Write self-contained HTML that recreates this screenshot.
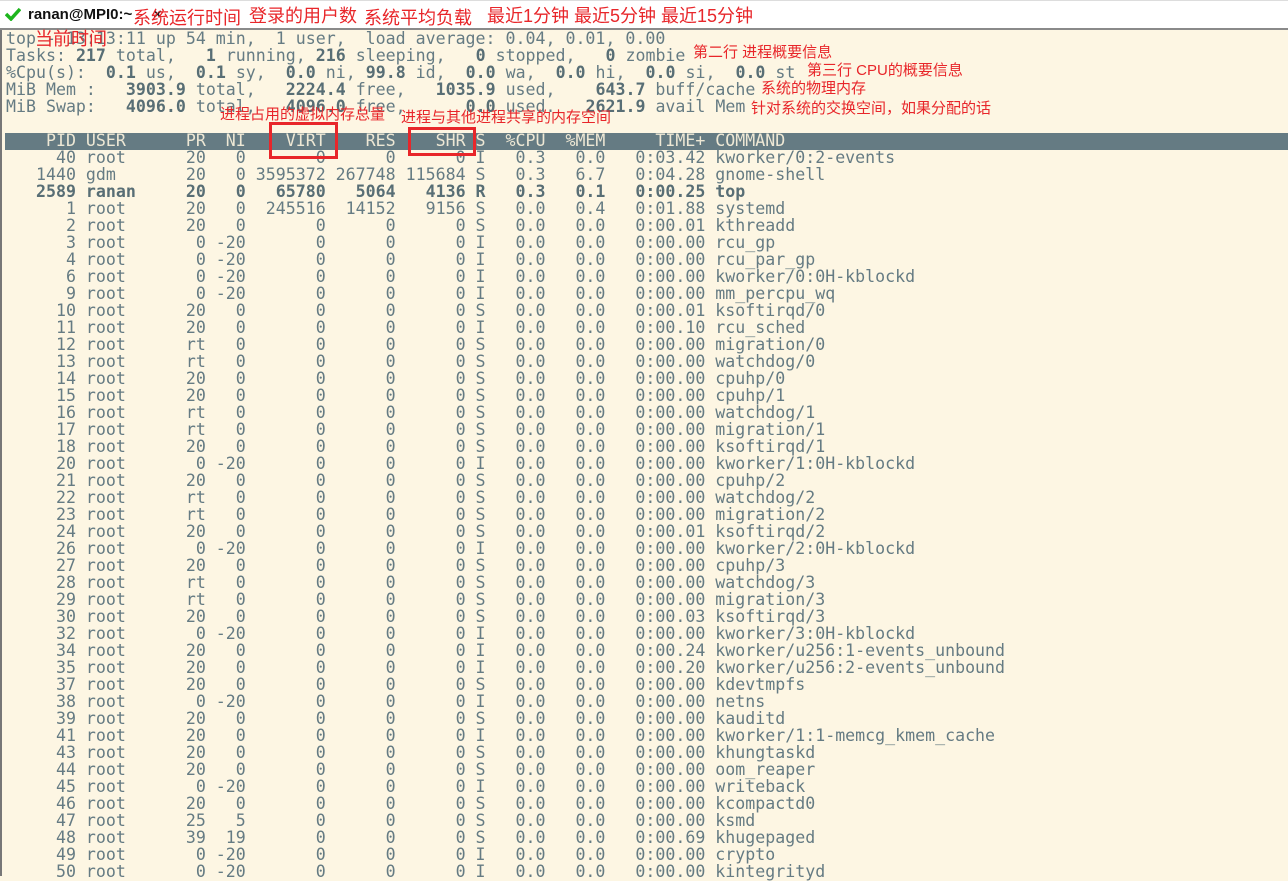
<!DOCTYPE html>
<html><head><meta charset="utf-8"><style>
html,body{margin:0;padding:0;width:1288px;height:876px;overflow:hidden;background:#fdf6e3;}
#top{position:absolute;left:0;top:0;width:1288px;height:28px;background:#fff;border-bottom:2px solid #8a8a8a;}
#top .tl{position:absolute;left:0;top:0;width:1288px;height:1px;background:#ddd;}
#tab{position:absolute;left:28px;top:6px;font:bold 15px "Liberation Sans",sans-serif;color:#111;}
#term{position:absolute;left:0;top:30px;width:1288px;height:846px;background:#fdf6e3;border-left:2px solid #777;box-sizing:border-box;}
pre{position:absolute;left:6px;top:30px;margin:0;font-family:"DejaVu Sans Mono",monospace;font-size:16.6px;line-height:17px;color:#657b83;}
b{color:#586e75;}
.bar{position:absolute;left:5px;top:133px;width:1283px;height:17px;background:#657b83;}
.hd{color:#eee8d5;}
.r{position:absolute;color:#e8262a;font-family:"Liberation Sans","Noto Sans CJK SC",sans-serif;font-size:18px;line-height:20px;white-space:nowrap;}
.s{font-size:15px;line-height:18px;}
.box{position:absolute;border:3px solid #e8262a;box-sizing:border-box;}
</style></head><body>
<div id="top"><div class="tl"></div>
<svg style="position:absolute;left:5px;top:7px" width="16" height="14" viewBox="0 0 16 14"><path d="M1 7 L6 12 L15 2" fill="none" stroke="#1db51d" stroke-width="3.5"/></svg>
<div id="tab">ranan@MPI0:~ &nbsp;&nbsp;&nbsp;&nbsp;×</div>
</div>
<div id="term"></div>
<div class="bar"></div>
<pre>top - 13:13:11 up 54 min,  1 user,  load average: 0.04, 0.01, 0.00
Tasks: <b>217</b> total,   <b>1</b> running, <b>216</b> sleeping,   <b>0</b> stopped,   <b>0</b> zombie
%Cpu(s):  <b>0.1</b> us,  <b>0.1</b> sy,  <b>0.0</b> ni, <b>99.8</b> id,  <b>0.0</b> wa,  <b>0.0</b> hi,  <b>0.0</b> si,  <b>0.0</b> st
MiB Mem :   <b>3903.9</b> total,   <b>2224.4</b> free,   <b>1035.9</b> used,    <b>643.7</b> buff/cache
MiB Swap:   <b>4096.0</b> total,   <b>4096.0</b> free,      <b>0.0</b> used.   <b>2621.9</b> avail Mem

<span class="hd">    PID USER      PR  NI    VIRT    RES    SHR S  %CPU  %MEM     TIME+ COMMAND</span>
     40 root      20   0       0      0      0 I   0.3   0.0   0:03.42 kworker/0:2-events
   1440 gdm       20   0 3595372 267748 115684 S   0.3   6.7   0:04.28 gnome-shell
<b>   2589 ranan     20   0   65780   5064   4136 R   0.3   0.1   0:00.25 top</b>
      1 root      20   0  245516  14152   9156 S   0.0   0.4   0:01.88 systemd
      2 root      20   0       0      0      0 S   0.0   0.0   0:00.01 kthreadd
      3 root       0 -20       0      0      0 I   0.0   0.0   0:00.00 rcu_gp
      4 root       0 -20       0      0      0 I   0.0   0.0   0:00.00 rcu_par_gp
      6 root       0 -20       0      0      0 I   0.0   0.0   0:00.00 kworker/0:0H-kblockd
      9 root       0 -20       0      0      0 I   0.0   0.0   0:00.00 mm_percpu_wq
     10 root      20   0       0      0      0 S   0.0   0.0   0:00.01 ksoftirqd/0
     11 root      20   0       0      0      0 I   0.0   0.0   0:00.10 rcu_sched
     12 root      rt   0       0      0      0 S   0.0   0.0   0:00.00 migration/0
     13 root      rt   0       0      0      0 S   0.0   0.0   0:00.00 watchdog/0
     14 root      20   0       0      0      0 S   0.0   0.0   0:00.00 cpuhp/0
     15 root      20   0       0      0      0 S   0.0   0.0   0:00.00 cpuhp/1
     16 root      rt   0       0      0      0 S   0.0   0.0   0:00.00 watchdog/1
     17 root      rt   0       0      0      0 S   0.0   0.0   0:00.00 migration/1
     18 root      20   0       0      0      0 S   0.0   0.0   0:00.00 ksoftirqd/1
     20 root       0 -20       0      0      0 I   0.0   0.0   0:00.00 kworker/1:0H-kblockd
     21 root      20   0       0      0      0 S   0.0   0.0   0:00.00 cpuhp/2
     22 root      rt   0       0      0      0 S   0.0   0.0   0:00.00 watchdog/2
     23 root      rt   0       0      0      0 S   0.0   0.0   0:00.00 migration/2
     24 root      20   0       0      0      0 S   0.0   0.0   0:00.01 ksoftirqd/2
     26 root       0 -20       0      0      0 I   0.0   0.0   0:00.00 kworker/2:0H-kblockd
     27 root      20   0       0      0      0 S   0.0   0.0   0:00.00 cpuhp/3
     28 root      rt   0       0      0      0 S   0.0   0.0   0:00.00 watchdog/3
     29 root      rt   0       0      0      0 S   0.0   0.0   0:00.00 migration/3
     30 root      20   0       0      0      0 S   0.0   0.0   0:00.03 ksoftirqd/3
     32 root       0 -20       0      0      0 I   0.0   0.0   0:00.00 kworker/3:0H-kblockd
     34 root      20   0       0      0      0 I   0.0   0.0   0:00.24 kworker/u256:1-events_unbound
     35 root      20   0       0      0      0 I   0.0   0.0   0:00.20 kworker/u256:2-events_unbound
     37 root      20   0       0      0      0 S   0.0   0.0   0:00.00 kdevtmpfs
     38 root       0 -20       0      0      0 I   0.0   0.0   0:00.00 netns
     39 root      20   0       0      0      0 S   0.0   0.0   0:00.00 kauditd
     41 root      20   0       0      0      0 I   0.0   0.0   0:00.00 kworker/1:1-memcg_kmem_cache
     43 root      20   0       0      0      0 S   0.0   0.0   0:00.00 khungtaskd
     44 root      20   0       0      0      0 S   0.0   0.0   0:00.00 oom_reaper
     45 root       0 -20       0      0      0 I   0.0   0.0   0:00.00 writeback
     46 root      20   0       0      0      0 S   0.0   0.0   0:00.00 kcompactd0
     47 root      25   5       0      0      0 S   0.0   0.0   0:00.00 ksmd
     48 root      39  19       0      0      0 S   0.0   0.0   0:00.69 khugepaged
     49 root       0 -20       0      0      0 I   0.0   0.0   0:00.00 crypto
     50 root       0 -20       0      0      0 I   0.0   0.0   0:00.00 kintegrityd
</pre>
<div class="r" style="left:133px;top:8px">系统运行时间</div>
<div class="r" style="left:249px;top:6px">登录的用户数</div>
<div class="r" style="left:364px;top:8px">系统平均负载</div>
<div class="r" style="left:487px;top:6px">最近1分钟 最近5分钟 最近15分钟</div>
<div class="r" style="left:35px;top:29px">当前时间</div>
<div class="r s" style="left:693px;top:44px">第二行 进程概要信息</div>
<div class="r s" style="left:807px;top:62px">第三行 CPU的概要信息</div>
<div class="r s" style="left:761px;top:80px">系统的物理内存</div>
<div class="r s" style="left:751px;top:100px">针对系统的交换空间，如果分配的话</div>
<div class="r s" style="left:220px;top:106px">进程占用的虚拟内存总量</div>
<div class="r s" style="left:401px;top:109px">进程与其他进程共享的内存空间</div>
<div class="box" style="left:269px;top:122px;width:69px;height:37px"></div>
<div class="box" style="left:408px;top:127px;width:68px;height:29px"></div>
</body></html>
